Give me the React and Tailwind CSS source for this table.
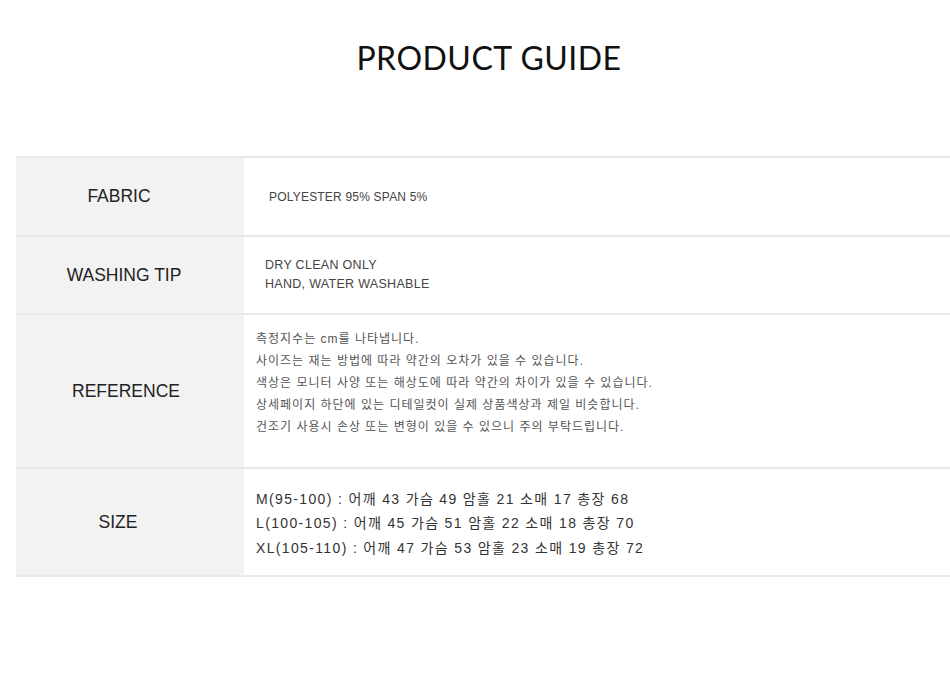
const rows = [
  {
    label: "FABRIC",
    h: "h-[79px]",
    lp: "pr-[22px]",
    content: (
      <p className="pl-[25px] text-[12px] tracking-[0.2px] text-[#444]">POLYESTER 95% SPAN 5%</p>
    ),
  },
  {
    label: "WASHING TIP",
    h: "h-[78px]",
    lp: "pr-[12px]",
    content: (
      <div className="pl-[21px] text-[12.5px] leading-[19px] tracking-[0.3px] text-[#444]">
        <p>DRY CLEAN ONLY</p>
        <p>HAND, WATER WASHABLE</p>
      </div>
    ),
  },
  {
    label: "REFERENCE",
    h: "h-[154px]",
    lp: "pr-[8px]",
    content: (
      <div className="pl-[12px] -mt-[17px] text-[12px] leading-[22px] tracking-[1px] text-[#555]">
        <p>측정지수는 cm를 나타냅니다.</p>
        <p>사이즈는 재는 방법에 따라 약간의 오차가 있을 수 있습니다.</p>
        <p>색상은 모니터 사양 또는 해상도에 따라 약간의 차이가 있을 수 있습니다.</p>
        <p>상세페이지 하단에 있는 디테일컷이 실제 상품색상과 제일 비슷합니다.</p>
        <p>건조기 사용시 손상 또는 변형이 있을 수 있으니 주의 부탁드립니다.</p>
      </div>
    ),
  },
  {
    label: "SIZE",
    h: "h-[108px]",
    lp: "pr-[24px]",
    content: (
      <div className="pl-[12px] mt-[3px] text-[14px] leading-[24.5px] tracking-[1.35px] text-[#333]">
        <p>M(95-100) : 어깨 43 가슴 49 암홀 21 소매 17 총장 68</p>
        <p>L(100-105) : 어깨 45 가슴 51 암홀 22 소매 18 총장 70</p>
        <p>XL(105-110) : 어깨 47 가슴 53 암홀 23 소매 19 총장 72</p>
      </div>
    ),
  },
];

export default function App() {
  return (
    <div className="w-[950px] h-[683px] bg-white overflow-hidden font-['Liberation_Sans','Noto_Sans_CJK_KR',sans-serif]">
      <h1 className="pt-[38px] pl-[28px] h-[156px] text-center text-[32px] leading-[40px] tracking-[0.5px] text-[#111] font-['Lato','Noto_Sans',sans-serif]">
        PRODUCT GUIDE
      </h1>
      <div className="ml-[16px] border-b-2 border-[#ebebeb]">
        {rows.map((r) => (
          <div key={r.label} className={`flex border-t-2 border-[#e8e8e8] ${r.h}`}>
            <div className={`w-[228px] shrink-0 bg-[#f2f2f2] flex items-center justify-center text-[17.5px] text-[#222] ${r.lp}`}>
              {r.label}
            </div>
            <div className="flex-1 flex items-center">{r.content}</div>
          </div>
        ))}
      </div>
    </div>
  );
}
